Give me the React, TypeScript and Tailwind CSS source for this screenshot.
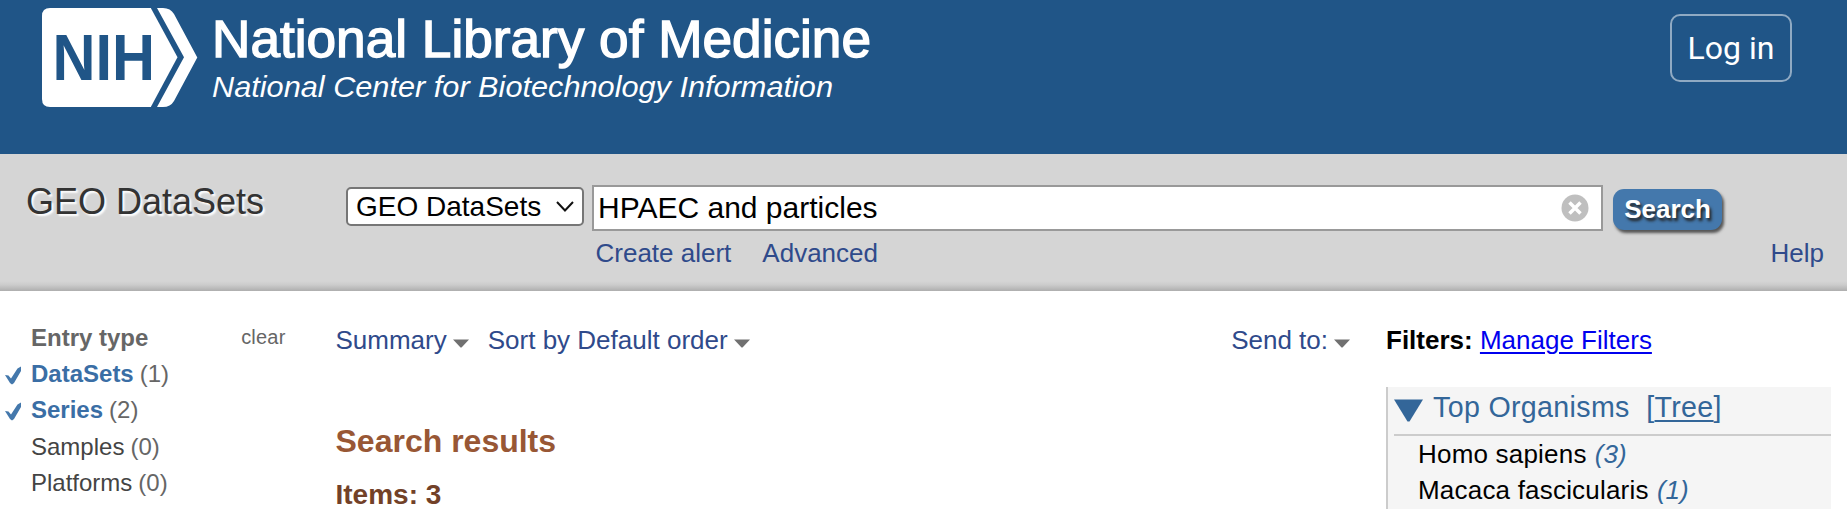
import type { ReactNode } from "react";

function Logo() {
  return (
    <svg width="900" height="154" viewBox="0 0 900 154" fill="#fff" fontFamily="'Liberation Sans', Arial, sans-serif">
      <path d="M50 8H150.8L177.500 57.300L150.800 107H50Q42 107 42 99V16Q42 8 50 8Z" />
      <path d="M157 8H163Q170.500 8 174 14L197.300 57.500L174 101Q170.500 107 163 107H157L184 57.300Z" />
      <text x="52.600" y="80" fontSize="65" fontWeight="700" fill="#205587" textLength="102.500" lengthAdjust="spacingAndGlyphs">NIH</text>
      <text x="212" y="56.700" fontSize="51" stroke="#fff" strokeWidth="1.400" textLength="659" lengthAdjust="spacingAndGlyphs">National Library of Medicine</text>
      <text x="212" y="96.500" fontSize="29.500" fontStyle="italic" textLength="621" lengthAdjust="spacingAndGlyphs">National Center for Biotechnology Information</text>
    </svg>
  );
}

function Caret() {
  return (
    <svg width="16" height="9" viewBox="0 0 16 9" className="mt-[17px] shrink-0">
      <path d="M0 0.500H16L8.500 8.500H7.500Z" fill="#707070" />
    </svg>
  );
}

function Check() {
  return (
    <svg width="17" height="19" viewBox="0 0 17 19" className="mt-[10px] shrink-0">
      <path d="M0 9L3.500 9.500L6 12.500L12.500 2.500L16 0.500V5L9 17L7 18.500L5 17Z" fill="#4478ac" />
    </svg>
  );
}

function EntryRow({ name, count, active }: { name: string; count: number; active?: boolean }) {
  return (
    <li className="flex h-[36.5px] pl-[5px]">
      <span className="w-[26px] shrink-0">{active && <Check />}</span>
      <a className={active ? "font-bold text-[#3a6ea5]" : "text-[#444]"}>{name}</a>
      <span className="ml-[6px] text-[#666]">({count})</span>
    </li>
  );
}

function MenuLink({ children }: { children: ReactNode }) {
  return (
    <a className="flex text-[#2f4a8b]">
      <span className="mr-[6px] whitespace-nowrap">{children}</span>
      <Caret />
    </a>
  );
}

function Organism({ name, count }: { name: string; count: number }) {
  return (
    <li className="pl-[24px]">
      <span className="tracking-[0.2px]">{name}</span> <span className="ml-[1px] italic text-[#336699]">({count})</span>
    </li>
  );
}

export default function App() {
  return (
    <div className="h-[520px] w-[1847px] overflow-hidden bg-white font-['Liberation_Sans',Arial,sans-serif] text-[26px]">
      <header className="flex h-[154px] items-start justify-between bg-[#205587] pr-[55px]">
        <Logo />
        <button className="mt-[14px] h-[68px] w-[122px] rounded-[10px] border-2 border-white/50 pb-[1px] font-[Roboto,sans-serif] text-[32px] leading-none text-white">
          Log in
        </button>
      </header>

      <section className="flex h-[137px] items-start bg-[linear-gradient(to_bottom,#d5d5d5_127px,#cbcbcb_131px,#aeaeae_137px)]">
        <h1 className="w-[346px] pt-[30px] pl-[26px] text-[36px] leading-[36px] text-[#333] [text-shadow:2px_2px_2px_#fff]">
          GEO DataSets
        </h1>
        <div className="mt-[33px] flex h-[39px] w-[238px] items-center justify-between rounded-[5px] border-2 border-[#767676] bg-white pr-[8px] pl-[8px] text-[28px] leading-[35px] text-black">
          <span>GEO DataSets</span>
          <svg width="18" height="11" viewBox="0 0 18 11" fill="none" stroke="#111" strokeWidth="2">
            <path d="M1 1L9 9.500L17 1" />
          </svg>
        </div>
        <div className="ml-[8px] w-[1011px] pt-[31px]">
          <div className="flex h-[46px] items-center justify-between border-2 border-[#999] bg-white pr-[12px] pl-[4px] text-[30px] leading-[42px] text-black">
            <span>HPAEC and particles</span>
            <svg width="28" height="28" viewBox="0 0 28 28">
              <circle cx="14" cy="14" r="13.500" fill="#bfbfbf" />
              <path d="M8.500 8.500L19.500 19.500M19.500 8.500L8.500 19.500" stroke="#fff" strokeWidth="3.500" />
            </svg>
          </div>
          <nav className="mt-[6px] flex gap-[31px] pl-[3.5px] leading-[32px] text-[#2f4a8b]">
            <a>Create alert</a>
            <a>Advanced</a>
          </nav>
        </div>
        <div className="ml-[10px] flex flex-1 flex-col items-start pt-[35px] pr-[23px]">
          <button className="h-[41px] w-[109px] rounded-[11px] bg-[#4478ac] text-[26px] leading-[41px] font-bold text-white shadow-[2px_3px_3px_#555] [text-shadow:2px_3px_3px_#222]">
            Search
          </button>
          <a className="mt-[7px] self-end leading-[32px] text-[#2f4a8b]">Help</a>
        </div>
      </section>

      <main className="flex items-start">
        <aside className="w-[335.5px] pt-[29px] text-[24px] leading-[36.5px]">
          <div className="flex h-[35.5px] justify-between pr-[50px] pl-[31px] text-[#666]">
            <h2 className="font-bold">Entry type</h2>
            <a className="text-[20px] leading-[34px] tracking-[0.2px]">clear</a>
          </div>
          <ul>
            <EntryRow name="DataSets" count={1} active />
            <EntryRow name="Series" count={2} active />
            <EntryRow name="Samples" count={0} />
            <EntryRow name="Platforms" count={0} />
          </ul>
        </aside>

        <section className="w-[1050.5px] pt-[31px] leading-[36px]">
          <div className="flex gap-[19px]">
            <MenuLink>Summary</MenuLink>
            <MenuLink>Sort by Default order</MenuLink>
            <div className="mr-[36px] ml-auto">
              <MenuLink>Send to:</MenuLink>
            </div>
          </div>
          <h2 className="mt-[63px] text-[32px] leading-[40px] font-bold text-[#985735]">Search results</h2>
          <h3 className="mt-[14px] text-[28px] leading-[40px] font-bold text-[#724128]">Items: 3</h3>
        </section>

        <aside className="w-[445px] pt-[31px] leading-[36px] text-black">
          <div>
            <b>Filters:</b>{" "}
            <a className="text-[#0000ee] underline decoration-2 underline-offset-[3px]">Manage Filters</a>
          </div>
          <div className="mt-[29px] h-[122px] border-l-2 border-[#ccc] bg-[#f5f5f5] pl-[6px]">
            <div className="flex h-[49px] border-b-2 border-[#ccc] text-[28.6px] leading-[40px] tracking-[0.34px] text-[#336699]">
              <svg width="29" height="23" viewBox="0 0 29 23" className="mt-[12px] mr-[10px]">
                <path d="M0 0.500H29L15.500 22.500H13.500Z" fill="#336699" />
              </svg>
              <h4>Top Organisms</h4>
              <span className="ml-[16.5px]">
                [<a className="underline decoration-2 underline-offset-[3px]">Tree</a>]
              </span>
            </div>
            <ul>
              <Organism name="Homo sapiens" count={3} />
              <Organism name="Macaca fascicularis" count={1} />
            </ul>
          </div>
        </aside>
      </main>
    </div>
  );
}
